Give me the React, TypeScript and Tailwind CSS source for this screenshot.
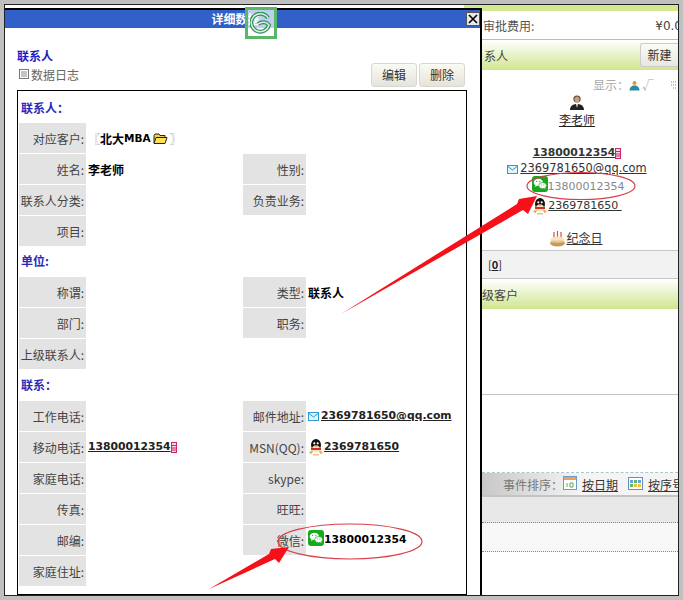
const cjk = "font-['Noto_Sans_CJK_SC','Noto_Sans',sans-serif]"
const num = "font-['DejaVu_Sans','Noto_Sans_CJK_SC',sans-serif]"

function WechatIcon({ size = 16 }: { size?: number }) {
  return (
    <svg width={size} height={size} viewBox="0 0 16 16" className="shrink-0">
      <rect width="16" height="16" rx="3" fill="#16a81e" />
      <ellipse cx="6.3" cy="6.4" rx="4.6" ry="3.7" fill="#fff" />
      <path d="M3.6 9l-.6 2 2.2-1.2z" fill="#fff" />
      <ellipse cx="10.6" cy="9.6" rx="3.9" ry="3.1" fill="#fff" stroke="#16a81e" strokeWidth=".7" />
      <path d="M12.4 12l1 1.5-.2-2z" fill="#fff" />
      <circle cx="4.7" cy="5.4" r=".6" fill="#16a81e" />
      <circle cx="7.8" cy="5.4" r=".6" fill="#16a81e" />
      <circle cx="9.3" cy="9" r=".5" fill="#16a81e" />
      <circle cx="11.9" cy="9" r=".5" fill="#16a81e" />
    </svg>
  )
}

function QQIcon() {
  return (
    <svg width="16" height="17" viewBox="0 0 16 17" className="shrink-0">
      <ellipse cx="8" cy="6" rx="5" ry="6" fill="#111" />
      <ellipse cx="8" cy="10" rx="4" ry="3.6" fill="#f3e3c4" />
      <circle cx="6.3" cy="4.3" r="1.1" fill="#fff" />
      <circle cx="9.7" cy="4.3" r="1.1" fill="#fff" />
      <path d="M5.8 6.5h4.4L8 8z" fill="#f0a020" />
      <path d="M3 9h10v2H3z" fill="#c8321e" />
      <path d="M1 14c1-2 3-3 4-2l-1 3zM15 14c-1-2-3-3-4-2l1 3z" fill="#e8b060" />
      <path d="M5 15h6v1.5H5z" fill="#e8c080" />
    </svg>
  )
}

function MailIcon() {
  return (
    <svg width="11" height="9" viewBox="0 0 11 9" className="shrink-0">
      <rect x=".5" y=".5" width="10" height="8" fill="#e4f4fb" stroke="#2a9ad0" />
      <path d="M1 1.5l4.5 3.5L10 1.5" fill="none" stroke="#2a9ad0" />
    </svg>
  )
}

function PhoneIcon() {
  return (
    <svg width="6" height="11" viewBox="0 0 6 11" className="shrink-0">
      <rect x=".5" y=".5" width="5" height="10" fill="#f6d8e4" stroke="#c8286a" />
      <path d="M1 3.5h4M1 6h4M1 8h4" stroke="#c8286a" />
    </svg>
  )
}

function FolderIcon() {
  return (
    <svg width="15" height="12" viewBox="0 0 15 12" className="shrink-0">
      <path d="M1 10V2.500L2 1h4l1 1.500h5v2" fill="#f5d040" stroke="#222" />
      <path d="M1 10.500l2-6h11l-2 6z" fill="#ffe25a" stroke="#222" />
    </svg>
  )
}

function PersonIcon() {
  return (
    <svg width="16" height="17" viewBox="0 0 16 17">
      <circle cx="8" cy="5" r="3.600" fill="#5a4030" />
      <ellipse cx="8" cy="5.600" rx="2.500" ry="3" fill="#c9a080" />
      <path d="M1 16c0-4 3-6 7-6s7 2 7 6z" fill="#222" />
      <path d="M7 10h2l-1 4z" fill="#eee" />
    </svg>
  )
}

function CakeIcon() {
  return (
    <svg width="17" height="17" viewBox="0 0 17 17" className="shrink-0">
      <path d="M5 2v6M8.500 1v7M12 2v6" stroke="#d85040" strokeWidth="1.200" />
      <ellipse cx="8.500" cy="13" rx="7.500" ry="3.500" fill="#c89858" />
      <ellipse cx="8.500" cy="9.500" rx="7" ry="3" fill="#f6e4c4" />
      <path d="M2 10.500v2l13 0v-2z" fill="#e6c48c" />
    </svg>
  )
}

function LogIcon() {
  return (
    <svg width="10" height="10" viewBox="0 0 10 10" className="mr-[2px] mt-[-3px] shrink-0">
      <rect x=".5" y=".5" width="9" height="9" fill="#fff" stroke="#777" />
      <path d="M2 3h6M2 5h6M2 7h6" stroke="#888" />
    </svg>
  )
}

function Label({ text }: { text: string }) {
  return (
    <div className="flex h-[30px] items-center justify-end bg-[#e3e3e3] pr-[2px] pt-px text-[12px] text-[#444]">
      {text}
    </div>
  )
}

function Value({ children }: { children?: React.ReactNode }) {
  return <div className="flex h-[30px] items-center pl-[2px] pt-px text-[12px] text-black">{children}</div>
}

function Heading({ text, h }: { text: string; h: string }) {
  return (
    <div className={`flex items-center pl-[2px] text-[12px] font-bold text-[#2a2ab8] ${h}`}>{text}</div>
  )
}

function DarkButton({ text, w }: { text: string; w: string }) {
  return (
    <div
      className={`flex h-[24px] items-center justify-center rounded-[3px] border border-[#d8d8d0] bg-gradient-to-b from-[#fbfbf6] to-[#e4e4da] text-[12px] text-[#333] ${w}`}
    >
      {text}
    </div>
  )
}

function DetailModal() {
  return (
    <div className="flex min-h-0 flex-1 flex-col border-t-2 border-r-2 border-black bg-white">
      <div className="flex h-[18px] shrink-0 items-center bg-[#3060c8]">
        <div className="flex-1 text-center text-[12px] font-bold text-white">详细数据</div>
        <div className="flex h-[14px] w-[14px] items-center justify-center border border-[#555] bg-[#e8e8e8] text-black">
          <svg width="10" height="10" viewBox="0 0 10 10">
            <path d="M1 1l8 8M9 1l-8 8" stroke="#000" strokeWidth="1.600" />
          </svg>
        </div>
      </div>

      <div className="flex h-[62px] shrink-0 justify-between pl-[12px] pr-[15px]">
        <div className="pt-[18px]">
          <div className="h-[19px] text-[12px] font-bold leading-[19px] text-[#1c1cc8]">联系人</div>
          <div className="flex h-[20px] items-center pl-[2px] text-[12px] text-[#666]">
            <LogIcon />
            数据日志
          </div>
        </div>
        <div className="flex gap-[2px] pt-[35px]">
          <DarkButton text="编辑" w="w-[46px]" />
          <DarkButton text="删除" w="w-[46px]" />
        </div>
      </div>

      <div className="ml-[12px] mr-[13px] min-h-0 flex-1 overflow-hidden border border-black pl-px">
        <Heading text="联系人：" h="h-[32px] pt-[2px]" />
        <div className="grid grid-cols-[67px_157px_63px_1fr] gap-y-px">
          <Label text="对应客户:" />
          <Value>
            <span className="text-[#999]">〖</span>
            <span className="font-bold">北大</span>
            <span className={`${num} text-[10.5px] font-bold`}>MBA</span>
            <span className="ml-[2px]"><FolderIcon /></span>
            <span className="ml-[2px] text-[#999]">〗</span>
          </Value>
          <div className="col-span-2" />
          <Label text="姓名:" />
          <Value><span className="font-bold">李老师</span></Value>
          <Label text="性别:" />
          <Value />
          <Label text="联系人分类:" />
          <Value />
          <Label text="负责业务:" />
          <Value />
          <Label text="项目:" />
          <div className="col-span-3" />
        </div>

        <Heading text="单位:" h="h-[31px] pb-[2px]" />
        <div className="grid grid-cols-[67px_157px_63px_1fr] gap-y-px">
          <Label text="称谓:" />
          <Value />
          <Label text="类型:" />
          <Value><span className="font-bold">联系人</span></Value>
          <Label text="部门:" />
          <Value />
          <Label text="职务:" />
          <Value />
          <Label text="上级联系人:" />
          <div className="col-span-3" />
        </div>

        <Heading text="联系：" h="h-[32px]" />
        <div className="grid grid-cols-[67px_157px_63px_1fr] gap-y-px">
          <Label text="工作电话:" />
          <Value />
          <Label text="邮件地址:" />
          <Value>
            <MailIcon />
            <span className={`${num} ml-[2px] text-[10.8px] font-bold text-[#222] underline`}>2369781650@qq.com</span>
          </Value>
          <Label text="移动电话:" />
          <Value>
            <span className={`${num} text-[10.8px] font-bold text-[#222] underline`}>13800012354</span>
            <PhoneIcon />
          </Value>
          <Label text="MSN(QQ):" />
          <Value>
            <QQIcon />
            <span className={`${num} text-[10.8px] font-bold text-[#222] underline`}>2369781650</span>
          </Value>
          <Label text="家庭电话:" />
          <Value />
          <Label text="skype:" />
          <Value />
          <Label text="传真:" />
          <Value />
          <Label text="旺旺:" />
          <Value />
          <Label text="邮编:" />
          <Value />
          <Label text="微信:" />
          <Value>
            <div className="mt-[-6px]"><WechatIcon /></div>
            <span className={`${num} text-[10.8px] font-bold text-black`}>13800012354</span>
          </Value>
          <Label text="家庭住址:" />
          <div className="col-span-3" />
        </div>
      </div>
    </div>
  )
}

function SidePanel() {
  return (
    <div className="flex w-[196px] shrink-0 flex-col overflow-hidden bg-white text-[12px] text-[#555]">
      <div className="h-[6px] shrink-0 bg-[#d2e992]" />
      <div className="flex h-[29px] shrink-0 items-center justify-between border-b border-[#bbb] pl-[1px] pt-[2px]">
        <span>审批费用:</span>
        <span className={`${num} mr-[-4px] text-[12px] text-[#444]`}>¥0.0</span>
      </div>
      <div className="flex h-[30px] shrink-0 items-center justify-between bg-gradient-to-b from-white to-[#cfe68e] pl-[2px] text-[#444]">
        <span className="pt-[1px]">系人</span>
        <div className="flex h-[24px] w-[38px] items-center justify-center rounded-l-[3px] border border-r-0 border-[#ccc] bg-gradient-to-b from-[#fbfbf6] to-[#e8e8dd] text-[#333]">
          新建
        </div>
      </div>

      <div className="flex h-[180px] shrink-0 flex-col items-center">
        <div className="flex h-[24px] w-full items-center justify-end pt-[6px] text-[#aaa]">
          <span>显示：</span>
          <svg width="11" height="11" viewBox="0 0 11 11" className="shrink-0">
            <circle cx="5.500" cy="3" r="2" fill="#e8923a" />
            <path d="M.5 10.500c0-3 2-5 5-5s5 2 5 5z" fill="#2a8aa8" />
          </svg>
          <span className="ml-[2px] mr-[16px]">√</span>
          <svg width="8" height="9" viewBox="0 0 8 9" className="shrink-0">
            <path d="M1 1h6M1 4h6M3 7h4" stroke="#c87088" strokeDasharray="1 1" />
          </svg>
        </div>
        <div className="mr-[6px] flex flex-col items-center text-[#222]">
          <PersonIcon />
          <span className="underline">李老师</span>
        </div>
        <div className="mr-[6px] mt-[16px] flex flex-col items-center">
          <div className="flex h-[16px] items-center">
            <span className={`${num} text-[10.8px] font-bold text-[#333] underline`}>13800012354</span>
            <PhoneIcon />
          </div>
          <div className="flex h-[16px] items-center">
            <MailIcon />
            <span className={`${num} ml-[2px] text-[11.4px] text-[#333] underline`}>2369781650@qq.com</span>
          </div>
          <div className="ml-[2px] flex h-[20px] items-center">
            <div className="mt-[-6px]"><WechatIcon /></div>
            <span className={`${num} text-[11px] text-[#888]`}>13800012354</span>
          </div>
          <div className="flex h-[18px] items-center">
            <QQIcon />
            <span className={`${num} text-[11px] text-[#333] underline`}>2369781650&nbsp;</span>
          </div>
          <div className="mr-[2px] mt-[13px] flex h-[20px] items-center">
            <CakeIcon />
            <span className="text-[#333] underline">纪念日</span>
          </div>
        </div>
      </div>

      <div className="flex h-[29px] shrink-0 items-center border-y border-[#c4c4c4] bg-[#f2f2f2] pl-[6px] text-[11px] text-[#222]">
        [<span className="font-bold underline">0</span>]
      </div>
      <div className="flex h-[30px] shrink-0 items-center bg-gradient-to-b from-white to-[#cfe68e] pt-[2px] text-[#444]">
        级客户
      </div>
      <div className="h-[86px] shrink-0 border-b border-[#c4c4c4]" />
      <div className="h-[78px] shrink-0 border-b border-dashed border-[#a8c8c8]" />
      <div className="flex h-[24px] shrink-0 items-center whitespace-nowrap border-b-2 border-[#c4c4c4] bg-gradient-to-r from-[#c8c8c8] via-[#f4f4f4] to-[#f4f4f4] pl-[21px] pt-[2px] text-[#777]">
        <span>事件排序：</span>
        <svg width="14" height="14" viewBox="0 0 14 14" className="mt-[-4px] shrink-0">
          <rect x=".5" y=".5" width="13" height="13" fill="#fff" stroke="#6a9ad0" />
          <rect x="1" y="1" width="12" height="3" fill="#f0a050" />
          <path d="M4 7v4M7 7h3v4H7z" stroke="#60a850" fill="none" />
        </svg>
        <span className="ml-[5px] text-[#333] underline">按日期</span>
        <svg width="15" height="13" viewBox="0 0 15 13" className="ml-[10px] mt-[-4px] shrink-0">
          <rect x=".5" y=".5" width="14" height="12" fill="#fff" stroke="#6a8ac0" />
          <rect x="2" y="3" width="3" height="3" fill="#60a8d8" />
          <rect x="6" y="3" width="3" height="3" fill="#60b860" />
          <rect x="10" y="3" width="3" height="3" fill="#60a8d8" />
          <rect x="2" y="7" width="3" height="3" fill="#60b860" />
          <rect x="6" y="7" width="3" height="3" fill="#f0c050" />
          <rect x="10" y="7" width="3" height="3" fill="#f0c050" />
        </svg>
        <span className="ml-[5px] text-[#333] underline">按序号</span>
      </div>
      <div className="h-[26px] shrink-0 border-b border-dotted border-[#888] bg-[#e8e8e8]" />
      <div className="h-[29px] shrink-0 border-b border-dotted border-[#888] bg-[#f8f8f8]" />
      <div className="min-h-0 flex-1" />
    </div>
  )
}

function Annotations() {
  return (
    <svg width="683" height="600" viewBox="0 0 683 600" className="pointer-events-none absolute left-0 top-0">
      <ellipse cx="581" cy="186" rx="54" ry="13.500" fill="none" stroke="#d8404a" strokeWidth="1.200" />
      <ellipse cx="350" cy="541.500" rx="72" ry="17.500" fill="none" stroke="#d8404a" strokeWidth="1.200" />
      <polygon points="341,314 517,204 519,199 537,196 528,214 523,210" fill="#f5101a" />
      <polygon points="209,589 269,554 271,549 289,547 279,563 275,559" fill="#f5101a" />
    </svg>
  )
}

function LogoOverlay() {
  return (
    <div className="absolute left-[245px] top-[7px] flex h-[32px] w-[32px] items-center justify-center border-[3px] border-[#58b868] bg-white/70">
      <svg width="22" height="22" viewBox="0 0 22 22">
        <path
          d="M18 6A9 9 0 1 0 19 13C17 10 12 9 8 12"
          fill="none"
          stroke="#2f8f58"
          strokeWidth="4"
        />
        <path
          d="M18 6A9 9 0 1 0 19 13C17 10 12 9 8 12"
          fill="none"
          stroke="#d8f0e0"
          strokeWidth="1.500"
        />
      </svg>
    </div>
  )
}

export default function App() {
  return (
    <div className={`relative h-[600px] w-[683px] overflow-hidden bg-[#c0c0c0] p-[4px] ${cjk}`}>
      <div className="flex h-[592px] border border-[#222] bg-white">
        <div className="flex w-[477px] shrink-0 flex-col">
          <div className="flex h-[3px] shrink-0 justify-end">
            <div className="h-[3px] w-[18px] bg-[#d2e992]" />
          </div>
          <DetailModal />
        </div>
        <SidePanel />
      </div>
      <LogoOverlay />
      <Annotations />
    </div>
  )
}
